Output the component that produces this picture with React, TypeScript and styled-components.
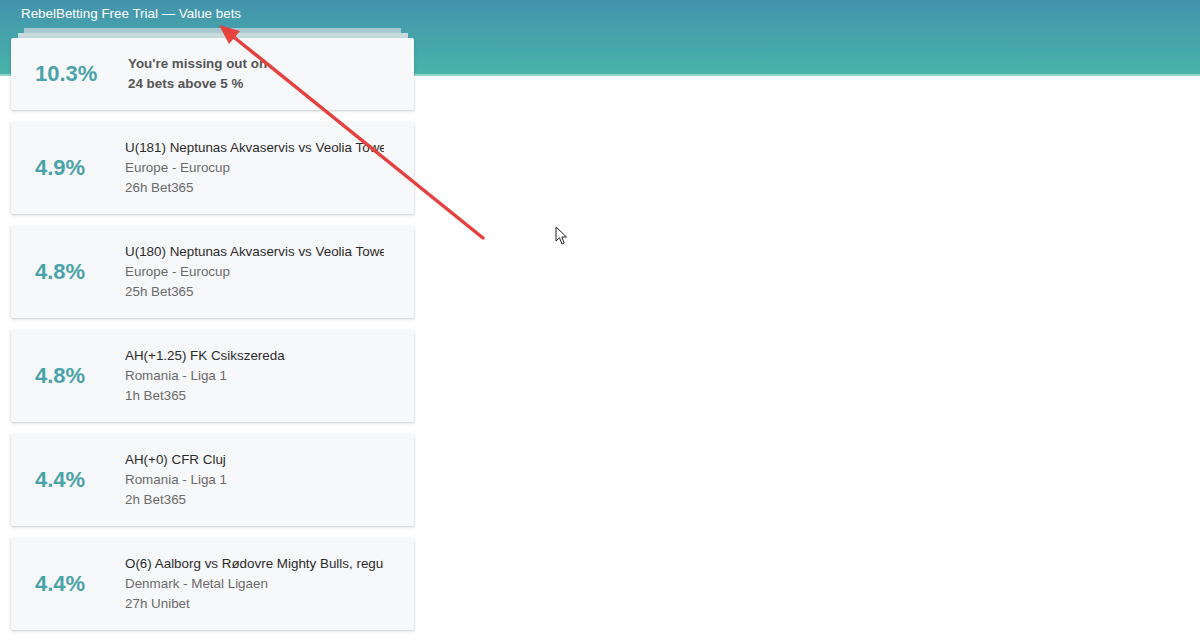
import React from 'react';
import styled, { createGlobalStyle } from 'styled-components';

type Bet = {
    id: number;
    value: string;
    title: string;
    league: string;
    meta: string;
};

const bets: Bet[] = [
    { id: 1, value: '4.9%', title: 'U(181) Neptunas Akvaservis vs Veolia Towers Hamburg', league: 'Europe - Eurocup', meta: '26h Bet365' },
    { id: 2, value: '4.8%', title: 'U(180) Neptunas Akvaservis vs Veolia Towers Hamburg', league: 'Europe - Eurocup', meta: '25h Bet365' },
    { id: 3, value: '4.8%', title: 'AH(+1.25) FK Csikszereda', league: 'Romania - Liga 1', meta: '1h Bet365' },
    { id: 4, value: '4.4%', title: 'AH(+0) CFR Cluj', league: 'Romania - Liga 1', meta: '2h Bet365' },
    { id: 5, value: '4.4%', title: 'O(6) Aalborg vs Rødovre Mighty Bulls, regular time', league: 'Denmark - Metal Ligaen', meta: '27h Unibet' }
];

const GlobalStyle = createGlobalStyle`
    html, body {
        margin: 0;
        padding: 0;
        background: #fff;
        font-family: "Liberation Sans", Arial, Helvetica, sans-serif;
    }
`;

const Page = styled.div`
    position: relative;
    width: 1200px;
    height: 640px;
    overflow: hidden;
    padding: 0 11px;
    box-sizing: border-box;
    font-family: "Liberation Sans", Arial, Helvetica, sans-serif;
    background:
        linear-gradient(to bottom, #4493ad 0px, #46a5ab 40px, #48b3a8 74px, #8fd3c9 74px, #8fd3c9 76px, #fff 76px);
`;

const Title = styled.div`
    height: 28px;
    line-height: 28px;
    padding-left: 10px;
    font-size: 13.4px;
    color: #fff;
`;

const List = styled.div`
    width: 403px;
    display: flex;
    flex-direction: column;
    gap: 12px;
`;

const Stack = styled.div`
    position: relative;
    margin-top: 10px;
`;

const Layer = styled.div<{ $depth: number }>`
    position: absolute;
    top: ${p => -5 * p.$depth}px;
    left: ${p => (p.$depth === 2 ? 13 : 7)}px;
    right: ${p => (p.$depth === 2 ? 13 : 6)}px;
    height: 20px;
    background: ${p => (p.$depth === 2 ? '#a8c9cf' : '#c8dcde')};
`;

const Card = styled.div<{ $tall?: boolean }>`
    position: relative;
    height: ${p => (p.$tall ? 92 : 72)}px;
    display: flex;
    align-items: center;
    padding-left: 24px;
    padding-right: 30px;
    background: #f7f8fa;
    border-radius: 2px;
    box-shadow: 0 1px 3px rgba(0, 0, 0, 0.22);
    overflow: hidden;
`;

const Percent = styled.div<{ $width: number }>`
    flex: 0 0 ${p => p.$width}px;
    font-size: 22px;
    font-weight: bold;
    color: #4aa3a8;
`;

const Info = styled.div`
    flex: 1;
    min-width: 0;
    overflow: hidden;
    font-size: 13.4px;
    line-height: 20px;
`;

const Line = styled.div<{ $muted?: boolean }>`
    white-space: nowrap;
    overflow: hidden;
    color: ${p => (p.$muted ? '#6b6b6b' : '#2b2b2b')};
`;

const Missing = styled(Info)`
    font-weight: bold;
    color: #555;
`;

const Overlay = styled.svg`
    position: absolute;
    left: 0;
    top: 0;
    pointer-events: none;
`;

const Pointer = styled.svg`
    position: absolute;
    left: 555px;
    top: 226px;
`;

export default function App() {
    return (
        <>
            <GlobalStyle />
            <Page>
                <Title>RebelBetting Free Trial — Value bets</Title>
                <List>
                    <Stack>
                        <Layer $depth={2} />
                        <Layer $depth={1} />
                        <Card>
                            <Percent $width={93}>10.3%</Percent>
                            <Missing>
                                <div>You're missing out on</div>
                                <div>24 bets above 5 %</div>
                            </Missing>
                        </Card>
                    </Stack>
                    {bets.map(bet => (
                        <Card key={bet.id} $tall>
                            <Percent $width={90}>{bet.value}</Percent>
                            <Info>
                                <Line>{bet.title}</Line>
                                <Line $muted>{bet.league}</Line>
                                <Line $muted>{bet.meta}</Line>
                            </Info>
                        </Card>
                    ))}
                </List>

                {/* annotation arrow */}
                <Overlay width="1200" height="640" viewBox="0 0 1200 640">
                    <line x1="483" y1="238" x2="230" y2="34" stroke="#e5413f" strokeWidth="3.5" strokeLinecap="round" />
                    <polygon points="219,25 240,31 229,44" fill="#e5413f" />
                </Overlay>

                {/* mouse pointer */}
                <Pointer width="14" height="20" viewBox="0 0 14 20">
                    <path
                        d="M1 1 L1 15 L4.5 11.8 L7 18 L9.2 17 L6.8 11 L11.5 11 Z"
                        fill="#fff"
                        stroke="#222"
                        strokeWidth="1"
                        strokeLinejoin="round"
                    />
                </Pointer>
            </Page>
        </>
    );
}
